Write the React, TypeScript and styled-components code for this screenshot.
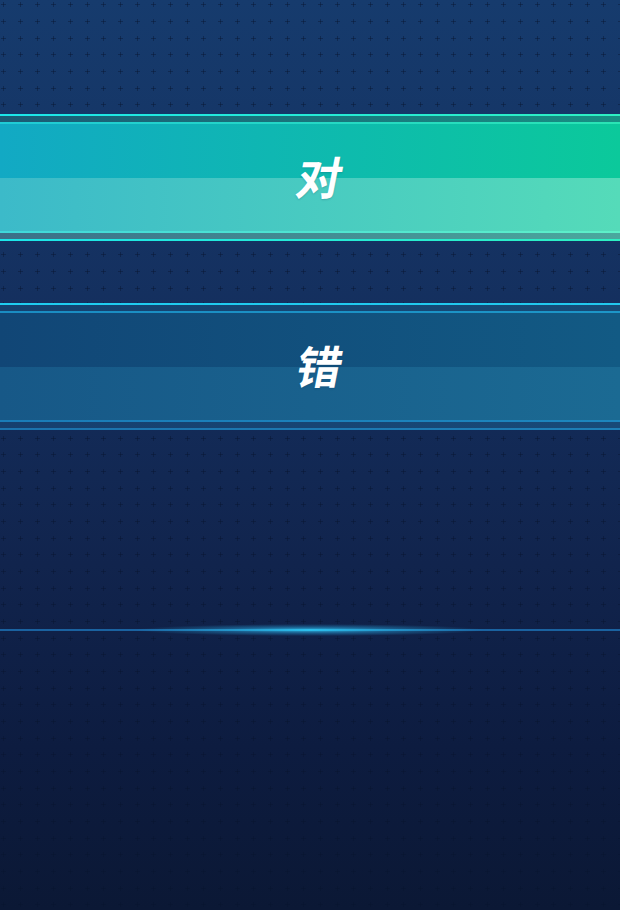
import React from "react";
import styled, { createGlobalStyle, css } from "styled-components";

const centers = [8, 25, 42];
const plusTile = encodeURIComponent(
  "<svg xmlns='http://www.w3.org/2000/svg' width='50' height='50' shape-rendering='crispEdges'>" +
    centers
      .flatMap((x) => centers.map((y) => [x, y]))
      .map(
        ([x, y]) =>
          `<rect x='${x - 2}' y='${y}' width='5' height='1' fill='rgba(6,18,45,0.42)'/><rect x='${x}' y='${y - 2}' width='1' height='5' fill='rgba(6,18,45,0.42)'/>`
      )
      .join("") +
    "</svg>"
);

const GlobalStyle = createGlobalStyle`
  html, body {
    margin: 0;
    padding: 0;
    background: #0b1836;
  }
  body {
    font-family: "Noto Sans CJK SC", "Noto Sans", sans-serif;
  }
`;

const Page = styled.div`
  width: 620px;
  min-height: 910px;
  display: flex;
  flex-direction: column;
  padding-top: 114px;
  box-sizing: border-box;
  background-image: url("data:image/svg+xml,${plusTile}"),
    linear-gradient(180deg, #163b6d 0%, #142f5e 35%, #11244d 62%, #0d1c40 82%, #0b1835 100%);
  background-size: 50px 50px, 100% 100%;
  background-position: -5px -4px, 0 0;
`;

const Options = styled.div`
  display: flex;
  flex-direction: column;
  gap: 62px;
`;

type Variant = "correct" | "wrong";

const palettes = {
  correct: {
    outer: "linear-gradient(90deg, #1ce6ea, #2ef0c2)",
    outerBottom: "linear-gradient(90deg, #1ce6ea, #2ef0c2)",
    strip: "linear-gradient(90deg, #1b5a74, #179083)",
    stripBottom: "linear-gradient(90deg, #3b6f88, #4aa89e)",
    line: "linear-gradient(90deg, #1fcbd6, #2ae4b4)",
    lineBottom: "linear-gradient(90deg, #3fd8da, #5ef0c8)",
    top: "linear-gradient(90deg, #12a9c4, #0bc99b)",
    bottom: "linear-gradient(90deg, #3cbac9, #55dbb9)",
  },
  wrong: {
    outer: "linear-gradient(90deg, #1fcdf0, #22c8ee)",
    outerBottom: "linear-gradient(90deg, #1b72ad, #1d7eb6)",
    strip: "linear-gradient(90deg, #15416f, #174b77)",
    stripBottom: "linear-gradient(90deg, #163f6e, #184a78)",
    line: "linear-gradient(90deg, #1a8cc2, #1d96c8)",
    lineBottom: "linear-gradient(90deg, #1a7cb8, #1d86be)",
    top: "linear-gradient(90deg, #114676, #125a84)",
    bottom: "linear-gradient(90deg, #175887, #1b6a93)",
  },
};

const Option = styled.div<{ $variant: Variant }>`
  display: flex;
  flex-direction: column;
  height: 127px;
  ${({ $variant }) => {
    const p = palettes[$variant];
    return css`
      --outer: ${p.outer};
      --outer-bottom: ${p.outerBottom};
      --strip: ${p.strip};
      --strip-bottom: ${p.stripBottom};
      --line: ${p.line};
      --line-bottom: ${p.lineBottom};
      --top: ${p.top};
      --bottom: ${p.bottom};
    `;
  }}
`;

const Band = styled.div<{ $h: number; $bg: string }>`
  height: ${({ $h }) => $h}px;
  flex: none;
  background: ${({ $bg }) => $bg};
`;

const Face = styled.div`
  flex: 1;
  position: relative;
  display: grid;
  grid-template-rows: 54px 53px;
`;

const Half = styled.div<{ $bg: string }>`
  background: ${({ $bg }) => $bg};
`;

const Label = styled.span`
  position: absolute;
  inset: 0;
  display: flex;
  align-items: center;
  justify-content: center;
  padding-bottom: 4px;
  padding-left: 20px;
  color: #ffffff;
  font-family: "Noto Sans CJK SC", "Noto Sans", sans-serif;
  font-weight: 700;
  font-style: normal;
  font-size: 45px;
  line-height: 1;
  transform: skewX(-11deg);
  text-shadow: 0 1px 2px rgba(0, 40, 80, 0.2);
`;

const Divider = styled.div`
  margin-top: 193px;
  height: 14px;
  background-image:
    linear-gradient(90deg, rgba(40, 180, 235, 0) 22%, #2cc0ee 50%, rgba(40, 180, 235, 0) 78%),
    linear-gradient(90deg, #1a62a0, #1a62a0),
    radial-gradient(ellipse 175px 6px at 50% 50%, rgba(50, 200, 245, 0.85) 0%, rgba(42, 175, 235, 0.4) 50%, rgba(40, 160, 220, 0) 100%);
  background-size: 100% 2px, 100% 2px, 100% 100%;
  background-position: 0 6px, 0 6px, 0 0;
  background-repeat: no-repeat;
`;

const OptionButton = ({ variant, label }: { variant: Variant; label: string }) => (
  <Option $variant={variant}>
    <Band $h={2} $bg="var(--outer)" />
    <Band $h={6} $bg="var(--strip)" />
    <Band $h={2} $bg="var(--line)" />
    <Face>
      <Half $bg="var(--top)" />
      <Half $bg="var(--bottom)" />
      <Label>{label}</Label>
    </Face>
    <Band $h={2} $bg="var(--line-bottom)" />
    <Band $h={6} $bg="var(--strip-bottom)" />
    <Band $h={2} $bg="var(--outer-bottom)" />
  </Option>
);

export default function App() {
  return (
    <>
      <GlobalStyle />
      <Page>
        <Options>
          <OptionButton variant="correct" label="对" />
          <OptionButton variant="wrong" label="错" />
        </Options>
        <Divider />
      </Page>
    </>
  );
}
